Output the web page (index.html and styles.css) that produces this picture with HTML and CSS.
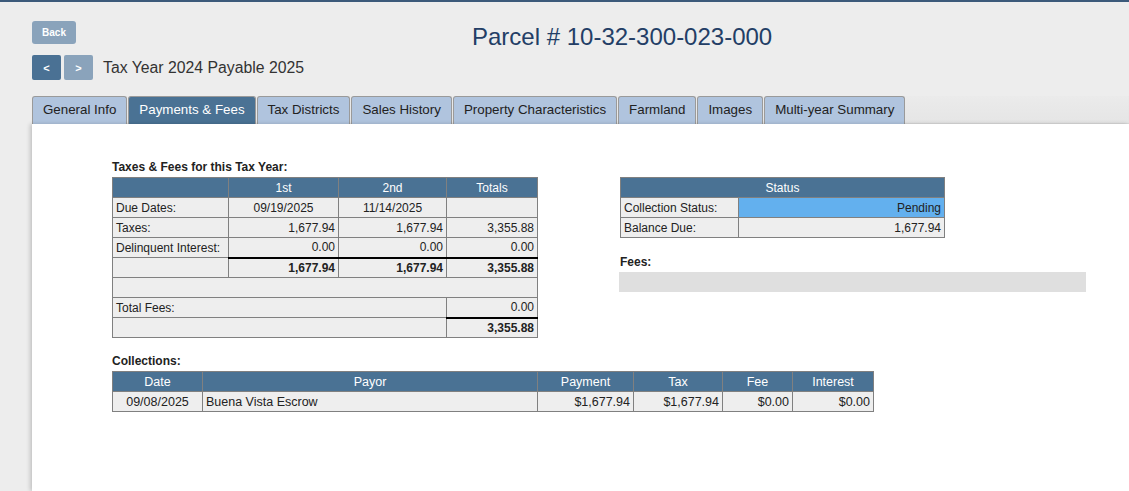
FILE: index.html
```html
<!DOCTYPE html>
<html lang="en">
<head>
<meta charset="utf-8">
<title>Parcel 10-32-300-023-000</title>
<link rel="stylesheet" href="styles.css">
</head>
<body>
<header class="top">
  <div class="top-left">
    <button class="btn-back" type="button">Back</button>
    <div class="nav-row">
      <button class="btn-nav btn-dark" type="button">&lt;</button>
      <button class="btn-nav btn-light" type="button">&gt;</button>
      <span class="tax-year">Tax Year 2024 Payable 2025</span>
    </div>
  </div>
  <h1 class="parcel">Parcel # 10-32-300-023-000</h1>
</header>

<nav class="tabs">
  <a class="tab">General Info</a>
  <a class="tab tab-active">Payments &amp; Fees</a>
  <a class="tab">Tax Districts</a>
  <a class="tab">Sales History</a>
  <a class="tab">Property Characteristics</a>
  <a class="tab">Farmland</a>
  <a class="tab">Images</a>
  <a class="tab">Multi-year Summary</a>
</nav>

<main class="panel">
  <div class="columns">
    <section class="col-left">
      <div class="label">Taxes &amp; Fees for this Tax Year:</div>
      <table class="grid taxes">
        <colgroup><col class="c1"><col class="c2"><col class="c3"><col class="c4"></colgroup>
        <tr class="head"><th></th><th>1st</th><th>2nd</th><th>Totals</th></tr>
        <tr><td>Due Dates:</td><td class="ctr">09/19/2025</td><td class="ctr">11/14/2025</td><td></td></tr>
        <tr><td>Taxes:</td><td class="num">1,677.94</td><td class="num">1,677.94</td><td class="num">3,355.88</td></tr>
        <tr><td>Delinquent Interest:</td><td class="num">0.00</td><td class="num">0.00</td><td class="num">0.00</td></tr>
        <tr class="sum"><td></td><td class="num b rule">1,677.94</td><td class="num b rule">1,677.94</td><td class="num b rule">3,355.88</td></tr>
        <tr><td colspan="4"></td></tr>
        <tr><td colspan="3">Total Fees:</td><td class="num">0.00</td></tr>
        <tr><td colspan="3"></td><td class="num b rule">3,355.88</td></tr>
      </table>
    </section>

    <section class="col-right">
      <table class="grid status">
        <colgroup><col class="s1"><col class="s2"></colgroup>
        <tr class="head"><th colspan="2">Status</th></tr>
        <tr><td>Collection Status:</td><td class="num pending">Pending</td></tr>
        <tr><td>Balance Due:</td><td class="num">1,677.94</td></tr>
      </table>
      <div class="label fees-label">Fees:</div>
      <div class="fees-bar"></div>
    </section>
  </div>

  <div class="label coll-label">Collections:</div>
  <table class="grid coll">
    <colgroup><col class="k1"><col class="k2"><col class="k3"><col class="k4"><col class="k5"><col class="k6"></colgroup>
    <tr class="head"><th>Date</th><th>Payor</th><th>Payment</th><th>Tax</th><th>Fee</th><th>Interest</th></tr>
    <tr><td class="ctr">09/08/2025</td><td>Buena Vista Escrow</td><td class="num">$1,677.94</td><td class="num">$1,677.94</td><td class="num">$0.00</td><td class="num">$0.00</td></tr>
  </table>
</main>
</body>
</html>
```

FILE: styles.css
```css
html, body {
  margin: 0;
  padding: 0;
}
body {
  background: #ededed;
  border-top: 2px solid #3c5a7a;
  font-family: "Liberation Sans", Arial, sans-serif;
  color: #222;
  height: 489px;
  overflow: hidden;
  display: flex;
  flex-direction: column;
}

/* header */
.top {
  display: flex;
  padding: 19px 0 0 32px;
}
.top-left {
  width: 440px;
  display: flex;
  flex-direction: column;
  align-items: flex-start;
}
.btn-back {
  width: 44px;
  height: 23px;
  border: none;
  border-radius: 3px;
  background: #8aa3bb;
  color: #fff;
  font-family: "Liberation Sans", Arial, sans-serif;
  font-size: 10px;
  font-weight: bold;
  padding: 0;
}
.nav-row {
  margin-top: 11px;
  display: flex;
  align-items: center;
  gap: 3px;
}
.btn-nav {
  width: 29px;
  height: 25px;
  border: none;
  border-radius: 2px;
  color: #fff;
  font-family: "Liberation Sans", Arial, sans-serif;
  font-size: 11px;
  font-weight: bold;
  padding: 0;
}
.btn-dark { background: #4a7194; }
.btn-light { background: #8aa3bb; }
.tax-year {
  margin-left: 7px;
  font-size: 15.8px;
  color: #333;
}
.parcel {
  margin: 2px 0 0 0;
  font-size: 24px;
  line-height: 28px;
  font-weight: normal;
  color: #233e66;
}

/* tabs */
.tabs {
  margin: 16px 0 0 32px;
  height: 28px;
  display: flex;
  gap: 1px;
  background: linear-gradient(#ebebeb, #e5e5e5);
  box-shadow: inset 0 -1px 1px rgba(0, 0, 0, 0.06);
}
.tab {
  box-sizing: border-box;
  height: 28px;
  line-height: 26px;
  padding: 0 10px;
  border: 1px solid #9a9a9a;
  border-bottom: none;
  border-radius: 3px 3px 0 0;
  background: #b0c4de;
  color: #222;
  font-size: 13.33px;
  white-space: nowrap;
}
.tab-active {
  background: #4a7294;
  color: #fff;
}

/* panel */
.panel {
  flex: 1;
  margin-left: 32px;
  background: #fff;
  box-shadow: -2px 0 4px rgba(0, 0, 0, 0.18);
  padding: 36px 0 0 80px;
}
.columns {
  display: flex;
  gap: 82px;
}
.label {
  font-size: 12px;
  line-height: 14px;
  font-weight: bold;
  color: #222;
  margin-bottom: 3px;
}
.col-right {
  padding-top: 17px;
}
.fees-label {
  margin-top: 17px;
}
.fees-bar {
  width: 467px;
  height: 20px;
  margin-left: -1px;
  background: #dfdfdf;
}
.coll-label {
  margin-top: 16px;
}

/* tables */
.grid {
  border-collapse: collapse;
  table-layout: fixed;
  font-size: 12px;
}
.grid th, .grid td {
  box-sizing: border-box;
  height: 20px;
  border: 1px solid #808080;
  padding: 0 3px;
  line-height: 18px;
  white-space: nowrap;
}
.grid td {
  background: #eeeeee;
  color: #222;
}
.grid .head th {
  background: #4a7294;
  color: #fff;
  font-weight: normal;
  text-align: center;
}
.ctr { text-align: center; }
.num { text-align: right; }
.b { font-weight: bold; }
.grid td.rule { border-top: 2px solid #000; }
.grid td.pending { background: #63b0ee; }

.taxes { width: 425px; }
.c1 { width: 116px; }
.c2 { width: 110px; }
.c3 { width: 108px; }
.c4 { width: 91px; }

.status { width: 324px; }
.s1 { width: 118px; }
.s2 { width: 206px; }

.coll {
  width: 761px;
  font-size: 12.5px;
}
.k1 { width: 90px; }
.k2 { width: 335px; }
.k3 { width: 96px; }
.k4 { width: 89px; }
.k5 { width: 70px; }
.k6 { width: 81px; }
```
